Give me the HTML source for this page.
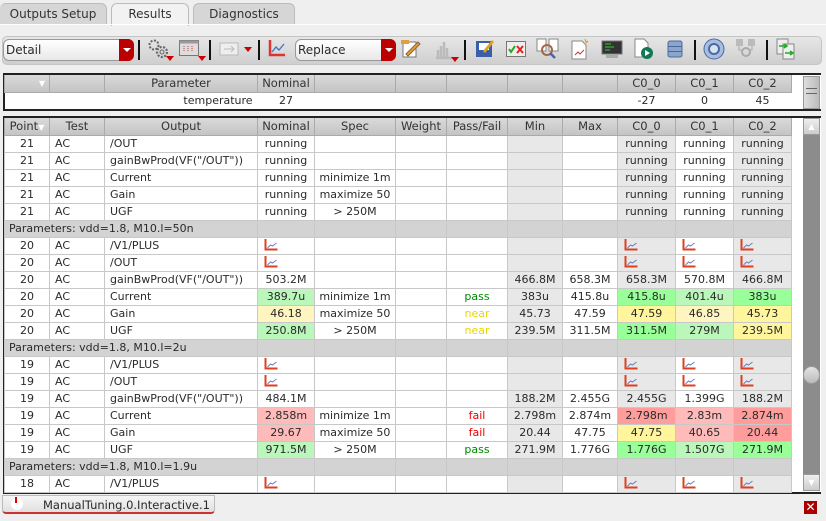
<!DOCTYPE html>
<html><head><meta charset="utf-8"><style>
*{box-sizing:border-box;margin:0;padding:0}
body{width:826px;height:521px;background:#efefef;font-family:"DejaVu Sans","Liberation Sans",sans-serif;font-size:11px;color:#2a2a2a;position:relative;overflow:hidden}
.tab{position:absolute;top:3px;height:22px;border:1px solid #bbb;border-bottom:none;border-radius:6px 6px 0 0;background:#d6d6d6;text-align:center;line-height:21px;font-size:12px;color:#333}
.tb{position:absolute;left:2px;top:36px;width:820px;height:29px;background:linear-gradient(#e6e6e6,#cfcfcf);border:1px solid #c4c4c4;border-radius:5px}
.combo{position:absolute;top:39px;height:22px;background:linear-gradient(#fff,#e8e8e8);border:1px solid #999;border-radius:6px;font-size:12px;line-height:20px;padding-left:2px}
.combo b{position:absolute;right:-1px;top:-1px;width:15px;height:22px;background:#b00;border-radius:0 6px 6px 0}
.combo b:after{content:"";position:absolute;left:4px;top:9px;border:4px solid transparent;border-top:4px solid #fff}
.sep{position:absolute;top:40px;width:2px;height:20px;background:#111}
.ic{position:absolute;top:38px}
.dd{position:absolute;border:4px solid transparent;border-top:5px solid #c00}
table{border-collapse:collapse;table-layout:fixed;position:absolute}
td{border:1px solid #c8c8c8;height:17px;padding:0;text-align:center;white-space:nowrap;overflow:hidden;line-height:15px}
th{background:linear-gradient(#dadada,#c4c4c4);font-weight:normal;height:17px;border:1px solid #aaa;border-top:none;color:#333;font-size:11.5px}
td.l{text-align:left;padding-left:5px}
.g{background:#e8e8e8}.w{background:#fff}
.G1{background:#99ff99}.G2{background:#bbf7bb}.Y1{background:#fff59d}.Y2{background:#fff5c0}.R1{background:#ff9d9d}.R2{background:#ffbaba}
.p td{background:#d3d3d3}
.pass{color:#080}.fail{color:#e00}.near{color:#e8d800}
</style></head><body>
<div class="tab" style="left:0;width:107px;border-left:none">Outputs Setup</div>
<div class="tab" style="left:111px;width:78px;background:#f2f2f2;height:23px">Results</div>
<div class="tab" style="left:193px;width:102px">Diagnostics</div>
<div style="position:absolute;left:0;top:24px;width:826px;height:1px;background:#fff"></div>

<div class="tb"></div>
<div class="combo" style="left:3px;width:131px">Detail<b></b></div>
<div class="sep" style="left:138px"></div>
<svg class="ic" style="left:147px" width="24" height="22"><circle cx="7" cy="7" r="4.5" fill="none" stroke="#666" stroke-width="2" stroke-dasharray="2 1.5"/><circle cx="15" cy="14" r="5" fill="none" stroke="#666" stroke-width="2.2" stroke-dasharray="2 1.5"/><circle cx="15" cy="14" r="2" fill="none" stroke="#666"/></svg>
<div class="dd" style="left:166px;top:56px"></div>
<svg class="ic" style="left:179px;top:40px" width="20" height="16"><rect x="0.5" y="0.5" width="19" height="15" fill="#ddd" stroke="#777"/><rect x="0.5" y="0.5" width="19" height="3" fill="#999"/><path d="M5 6v5M9 6v5M13 6v5" stroke="#b44" stroke-dasharray="1 1"/></svg>
<div class="dd" style="left:198px;top:56px"></div>
<div class="sep" style="left:209px"></div>
<svg class="ic" style="left:219px;top:42px" width="20" height="14"><rect x="1" y="1" width="18" height="12" fill="#eee" stroke="#bbb"/><path d="M5 7h10M12 4l3 3-3 3" stroke="#bbb" fill="none"/></svg>
<div class="dd" style="left:244px;top:47px"></div>
<div class="sep" style="left:258px"></div>
<svg class="ic" style="left:268px;top:39px" width="18" height="18"><path d="M2 1v15h15" stroke="#d33" stroke-width="2.5" fill="none"/><path d="M4 13l4-5 3 3 5-6" stroke="#4472c4" stroke-width="1.3" fill="none"/></svg>
<div class="combo" style="left:295px;width:101px">Replace<b></b></div>
<svg class="ic" style="left:400px" width="22" height="20"><rect x="3" y="4" width="13" height="15" fill="#fff" stroke="#777"/><path d="M6 16l12-12 2 2-12 12z" fill="#e8a030" stroke="#864"/><path d="M1 2h8v4H1z" fill="#e0a040"/></svg>
<svg class="ic" style="left:434px" width="20" height="22"><path d="M2 20h16M4 20v-8M7 20v-12M10 20v-16M13 20v-10" stroke="#bbb" stroke-width="2.5"/></svg>
<div class="dd" style="left:451px;top:57px"></div>
<div class="sep" style="left:464px"></div>
<svg class="ic" style="left:475px" width="20" height="20"><rect x="1" y="3" width="16" height="16" fill="#3a5fa8"/><rect x="4" y="5" width="10" height="7" fill="#fff"/><path d="M8 13l9-11 2 2-9 11z" fill="#e0a020"/></svg>
<svg class="ic" style="left:506px;top:41px" width="20" height="16"><rect x="0.5" y="0.5" width="19" height="15" fill="#eee" stroke="#777"/><path d="M3 8l2 3 4-6" stroke="#2a2" stroke-width="2" fill="none"/><path d="M11 5l6 7M17 5l-6 7" stroke="#d22" stroke-width="2"/></svg>
<svg class="ic" style="left:536px" width="24" height="22"><rect x="1" y="1" width="9" height="12" fill="#fff" stroke="#888"/><rect x="13" y="1" width="9" height="12" fill="#fff" stroke="#888"/><circle cx="11" cy="12" r="5" fill="none" stroke="#a64" stroke-width="2"/><path d="M14 15l5 5" stroke="#46a" stroke-width="2.5"/></svg>
<svg class="ic" style="left:570px" width="20" height="22"><path d="M2 3h10l4 4v14H2z" fill="#fff" stroke="#888"/><path d="M5 17l3-3 2 2 4-4" stroke="#c33" fill="none"/><path d="M15 1l1 3M18 3l-2 2" stroke="#e80"/></svg>
<svg class="ic" style="left:601px;top:40px" width="22" height="18"><rect x="1" y="1" width="20" height="13" fill="#333" stroke="#777"/><path d="M4 4h6M4 7h9M4 10h5" stroke="#3c3"/><rect x="5" y="15" width="12" height="3" fill="#aaa"/></svg>
<svg class="ic" style="left:633px" width="22" height="22"><path d="M2 1h9l4 4v14H2z" fill="#fff" stroke="#888"/><circle cx="14" cy="15" r="6" fill="#175"/><path d="M12 12v6l5-3z" fill="#fff"/></svg>
<svg class="ic" style="left:667px;top:40px" width="16" height="18"><rect x="1" y="1" width="14" height="16" rx="2" fill="#8aa6cc" stroke="#4a6a9a"/><path d="M1 6.5h14M1 11.5h14" stroke="#4a6a9a"/></svg>
<div class="sep" style="left:694px"></div>
<svg class="ic" style="left:703px" width="22" height="22"><circle cx="11" cy="11" r="10" fill="#a8bde0" stroke="#4a6aa0"/><circle cx="11" cy="11" r="5" fill="#d8e4f4" stroke="#4a6aa0" stroke-width="2"/></svg>
<svg class="ic" style="left:735px" width="22" height="22"><rect x="1" y="1" width="7" height="7" fill="#bbb"/><rect x="13" y="1" width="7" height="7" fill="#bbb"/><circle cx="11" cy="14" r="4" fill="none" stroke="#aaa" stroke-width="2"/><path d="M4 8v4h4M17 8v4h-3" stroke="#aaa" fill="none"/></svg>
<div class="sep" style="left:766px"></div>
<svg class="ic" style="left:776px" width="20" height="22"><path d="M1 1h11v15H1z" fill="#eee" stroke="#888"/><path d="M7 6h11v15H7z" fill="#eee" stroke="#888"/><path d="M3 8h8M8 6l3 2-3 2M9 15h8M14 13l3 2-3 2" stroke="#2a2" stroke-width="1.5" fill="none"/></svg>

<!-- top table -->
<div style="position:absolute;left:3px;top:73px;width:818px;height:38px;border:2px solid #222;border-right:none;background:#fff"></div>
<table style="left:4px;top:75px;width:787px">
<colgroup><col style="width:45px"><col style="width:55px"><col style="width:153px"><col style="width:57px"><col style="width:81px"><col style="width:51px"><col style="width:61px"><col style="width:55px"><col style="width:55px"><col style="width:58px"><col style="width:58px"><col style="width:58px"></colgroup>
<tr><th style="text-align:right;padding-right:4px;font-size:8px;color:#fff">▼</th><th></th><th>Parameter</th><th>Nominal</th><th></th><th></th><th></th><th></th><th></th><th>C0_0</th><th>C0_1</th><th>C0_2</th></tr>
<tr><td style="border:none" colspan="3" ></td><td style="border:none"></td><td style="border:none" colspan="5"></td><td style="border:none">-27</td><td style="border:none">0</td><td style="border:none">45</td></tr>
</table>
<div style="position:absolute;left:148px;top:93px;width:140px;text-align:center;line-height:15px">temperature</div>
<div style="position:absolute;left:260px;top:93px;width:52px;text-align:center;line-height:15px">27</div>
<div style="position:absolute;left:803px;top:76px;width:17px;height:33px;background:linear-gradient(90deg,#ddd,#bbb);border:1px solid #999"></div>
<div style="position:absolute;left:806px;top:88px;width:11px;height:6px;border-top:1px solid #666;border-bottom:1px solid #666"></div>

<!-- main table -->
<div style="position:absolute;left:3px;top:116px;width:818px;height:378px;border:2px solid #222;border-right:none;background:#fff"></div>
<table style="left:4px;top:118px;width:787px">
<colgroup><col style="width:45px"><col style="width:55px"><col style="width:153px"><col style="width:57px"><col style="width:81px"><col style="width:51px"><col style="width:61px"><col style="width:55px"><col style="width:55px"><col style="width:58px"><col style="width:58px"><col style="width:58px"></colgroup>
<tr><th>Point<span style="font-size:8px;color:#fff">▼</span></th><th>Test</th><th>Output</th><th>Nominal</th><th>Spec</th><th>Weight</th><th>Pass/Fail</th><th>Min</th><th>Max</th><th>C0_0</th><th>C0_1</th><th>C0_2</th></tr>
<tr><td>21</td><td class="l">AC</td><td class="l">/OUT</td><td>running</td><td></td><td></td><td></td><td class="g"></td><td></td><td class="g">running</td><td>running</td><td class="g">running</td></tr>
<tr><td>21</td><td class="l">AC</td><td class="l">gainBwProd(VF("/OUT"))</td><td>running</td><td></td><td></td><td></td><td class="g"></td><td></td><td class="g">running</td><td>running</td><td class="g">running</td></tr>
<tr><td>21</td><td class="l">AC</td><td class="l">Current</td><td>running</td><td>minimize 1m</td><td></td><td></td><td class="g"></td><td></td><td class="g">running</td><td>running</td><td class="g">running</td></tr>
<tr><td>21</td><td class="l">AC</td><td class="l">Gain</td><td>running</td><td>maximize 50</td><td></td><td></td><td class="g"></td><td></td><td class="g">running</td><td>running</td><td class="g">running</td></tr>
<tr><td>21</td><td class="l">AC</td><td class="l">UGF</td><td>running</td><td>&gt; 250M</td><td></td><td></td><td class="g"></td><td></td><td class="g">running</td><td>running</td><td class="g">running</td></tr>
<tr class="p"><td colspan="3" class="l" style="padding-left:4px">Parameters: vdd=1.8, M10.l=50n</td><td></td><td></td><td></td><td></td><td></td><td></td><td></td><td></td><td></td></tr>
<tr><td>20</td><td class="l">AC</td><td class="l">/V1/PLUS</td><td class="l">§</td><td></td><td></td><td></td><td class="g"></td><td></td><td class="g l">§</td><td class="l">§</td><td class="g l">§</td></tr>
<tr><td>20</td><td class="l">AC</td><td class="l">/OUT</td><td class="l">§</td><td></td><td></td><td></td><td class="g"></td><td></td><td class="g l">§</td><td class="l">§</td><td class="g l">§</td></tr>
<tr><td>20</td><td class="l">AC</td><td class="l">gainBwProd(VF("/OUT"))</td><td>503.2M</td><td></td><td></td><td></td><td class="g">466.8M</td><td>658.3M</td><td class="g">658.3M</td><td>570.8M</td><td class="g">466.8M</td></tr>
<tr><td>20</td><td class="l">AC</td><td class="l">Current</td><td class="G2">389.7u</td><td>minimize 1m</td><td></td><td class="pass">pass</td><td class="g">383u</td><td>415.8u</td><td class="G1">415.8u</td><td class="G2">401.4u</td><td class="G1">383u</td></tr>
<tr><td>20</td><td class="l">AC</td><td class="l">Gain</td><td class="Y2">46.18</td><td>maximize 50</td><td></td><td class="near">near</td><td class="g">45.73</td><td>47.59</td><td class="Y1">47.59</td><td class="Y2">46.85</td><td class="Y1">45.73</td></tr>
<tr><td>20</td><td class="l">AC</td><td class="l">UGF</td><td class="G2">250.8M</td><td>&gt; 250M</td><td></td><td class="near">near</td><td class="g">239.5M</td><td>311.5M</td><td class="G1">311.5M</td><td class="G2">279M</td><td class="Y1">239.5M</td></tr>
<tr class="p"><td colspan="3" class="l" style="padding-left:4px">Parameters: vdd=1.8, M10.l=2u</td><td></td><td></td><td></td><td></td><td></td><td></td><td></td><td></td><td></td></tr>
<tr><td>19</td><td class="l">AC</td><td class="l">/V1/PLUS</td><td class="l">§</td><td></td><td></td><td></td><td class="g"></td><td></td><td class="g l">§</td><td class="l">§</td><td class="g l">§</td></tr>
<tr><td>19</td><td class="l">AC</td><td class="l">/OUT</td><td class="l">§</td><td></td><td></td><td></td><td class="g"></td><td></td><td class="g l">§</td><td class="l">§</td><td class="g l">§</td></tr>
<tr><td>19</td><td class="l">AC</td><td class="l">gainBwProd(VF("/OUT"))</td><td>484.1M</td><td></td><td></td><td></td><td class="g">188.2M</td><td>2.455G</td><td class="g">2.455G</td><td>1.399G</td><td class="g">188.2M</td></tr>
<tr><td>19</td><td class="l">AC</td><td class="l">Current</td><td class="R2">2.858m</td><td>minimize 1m</td><td></td><td class="fail">fail</td><td class="g">2.798m</td><td>2.874m</td><td class="R1">2.798m</td><td class="R2">2.83m</td><td class="R1">2.874m</td></tr>
<tr><td>19</td><td class="l">AC</td><td class="l">Gain</td><td class="R2">29.67</td><td>maximize 50</td><td></td><td class="fail">fail</td><td class="g">20.44</td><td>47.75</td><td class="Y1">47.75</td><td class="R2">40.65</td><td class="R1">20.44</td></tr>
<tr><td>19</td><td class="l">AC</td><td class="l">UGF</td><td class="G2">971.5M</td><td>&gt; 250M</td><td></td><td class="pass">pass</td><td class="g">271.9M</td><td>1.776G</td><td class="G1">1.776G</td><td class="G2">1.507G</td><td class="G1">271.9M</td></tr>
<tr class="p"><td colspan="3" class="l" style="padding-left:4px">Parameters: vdd=1.8, M10.l=1.9u</td><td></td><td></td><td></td><td></td><td></td><td></td><td></td><td></td><td></td></tr>
<tr><td>18</td><td class="l">AC</td><td class="l">/V1/PLUS</td><td class="l">§</td><td></td><td></td><td></td><td class="g"></td><td></td><td class="g l">§</td><td class="l">§</td><td class="g l">§</td></tr>
</table>
<!-- scrollbar -->
<div style="position:absolute;left:803px;top:118px;width:17px;height:373px;background:#8c8c8c"></div>
<div style="position:absolute;left:803px;top:118px;width:17px;height:17px;background:linear-gradient(#eee,#ccc);border:1px solid #999;text-align:center;font-size:8px;line-height:15px;color:#fff">▲</div>
<div style="position:absolute;left:803px;top:474px;width:17px;height:17px;background:linear-gradient(#eee,#ccc);border:1px solid #999;text-align:center;font-size:8px;line-height:15px;color:#fff">▼</div>
<div style="position:absolute;left:803px;top:366px;width:17px;height:18px;border-radius:9px;background:linear-gradient(#e4e4e4,#bbb);border:1px solid #999"></div>

<!-- bottom tab -->
<div style="position:absolute;left:2px;top:495px;width:213px;height:19px;background:linear-gradient(#f6f6f6,#e0e0e0);border:1px solid #bbb;border-bottom:2px solid #c33;border-radius:0 0 4px 4px;font-size:11.5px;line-height:18px;padding-left:40px;white-space:nowrap;overflow:hidden">ManualTuning.0.Interactive.1</div>
<div style="position:absolute;left:11px;top:498px;width:12px;height:12px;border-radius:6px;background:#fff"></div>
<div style="position:absolute;left:15px;top:497px;width:2px;height:6px;background:#d00"></div>
<div style="position:absolute;left:804px;top:501px;width:13px;height:13px;background:#a00;color:#fff;font-size:12px;line-height:13px;text-align:center;font-weight:bold">✕</div>
<script>
document.querySelectorAll('td').forEach(function(t){if(t.textContent==='§'){t.innerHTML='<svg width="14" height="13" style="margin-left:1px;vertical-align:-2px"><path d="M1.5 1v10.5h12" stroke="#e04020" stroke-width="2" fill="none"/><path d="M3.5 10l3-3 2 1 4-3" stroke="#6a7fc0" stroke-width="1" fill="none"/></svg>';}});
</script>
</body></html>
